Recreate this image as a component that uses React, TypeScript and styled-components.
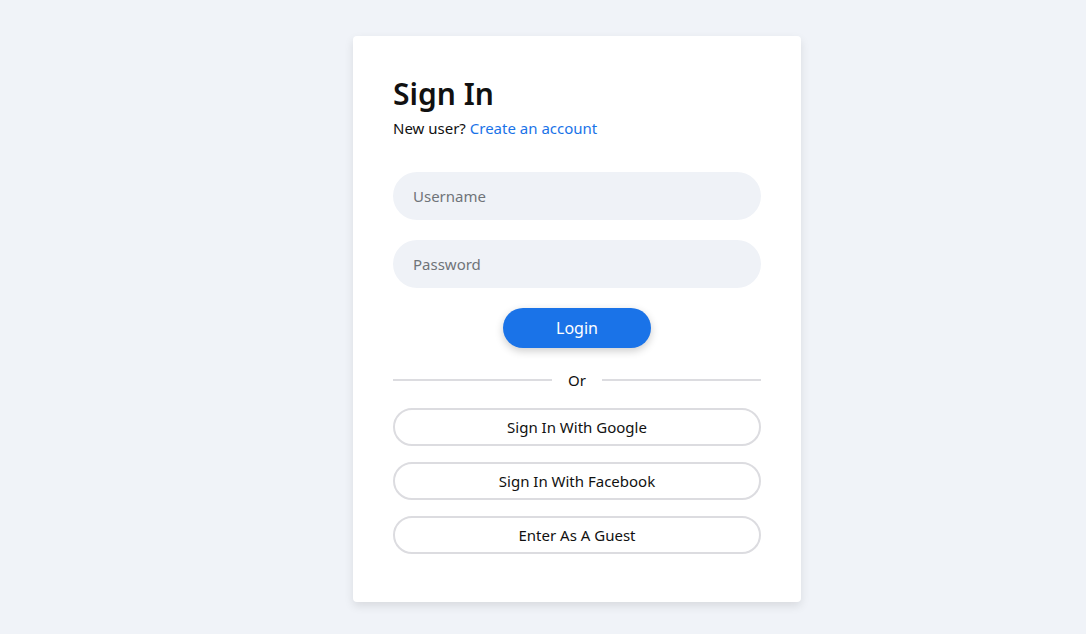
import React from 'react';
import styled, { createGlobalStyle } from 'styled-components';

const GlobalStyle = createGlobalStyle`
  html, body {
    margin: 0;
    padding: 0;
    background: #f0f3f8;
    font-family: 'Noto Sans', 'Open Sans', sans-serif;
    color: #111;
  }
  * {
    box-sizing: border-box;
  }
`;

const Page = styled.div`
  min-height: 634px;
  display: flex;
  justify-content: center;
  align-items: flex-start;
  padding: 36px 0 0 68px;
`;

const Card = styled.div`
  width: 448px;
  background: #fff;
  border-radius: 4px;
  box-shadow: 0 4px 10px rgba(0, 0, 0, 0.1);
  padding: 40px 40px 48px;
  display: flex;
  flex-direction: column;
`;

const Title = styled.h1`
  margin: 0;
  font-size: 30px;
  font-weight: 600;
  line-height: 36px;
  color: #111;
`;

const Subtitle = styled.p`
  margin: 4px 0 0;
  font-size: 15px;
  line-height: 24px;
  color: #111;
`;

const Link = styled.a`
  color: #1a73e8;
  text-decoration: none;
  cursor: pointer;
`;

const Form = styled.form`
  margin-top: 32px;
  display: flex;
  flex-direction: column;
  gap: 20px;
`;

const Input = styled.input`
  width: 100%;
  height: 48px;
  border: none;
  border-radius: 24px;
  background: #eff2f7;
  padding: 0 20px;
  font-family: inherit;
  font-size: 15px;
  color: #111;
  outline: none;

  &::placeholder {
    color: #6f7479;
  }
`;

const LoginButton = styled.button`
  align-self: center;
  width: 148px;
  height: 40px;
  border: none;
  border-radius: 20px;
  background: #1a73e8;
  color: #fff;
  font-family: inherit;
  font-size: 16px;
  box-shadow: 0 3px 8px rgba(0, 0, 0, 0.2);
  cursor: pointer;
`;

const Divider = styled.div`
  margin: 20px 0 16px;
  display: flex;
  align-items: center;
  gap: 16px;
  font-size: 15px;
  line-height: 24px;

  &::before,
  &::after {
    content: '';
    flex: 1;
    height: 2px;
    background: #dcdce0;
  }
`;

const AltList = styled.div`
  display: flex;
  flex-direction: column;
  gap: 16px;
`;

const OutlineButton = styled.button`
  width: 100%;
  height: 38px;
  border: 2px solid #dcdce0;
  border-radius: 19px;
  background: #fff;
  color: #111;
  font-family: inherit;
  font-size: 15px;
  cursor: pointer;
`;

export default function App() {
  return (
    <>
      <GlobalStyle />
      <Page>
        <Card>
          <Title>Sign In</Title>
          <Subtitle>
            New user? <Link>Create an account</Link>
          </Subtitle>
          <Form onSubmit={(e) => e.preventDefault()}>
            <Input placeholder="Username" />
            <Input placeholder="Password" type="password" />
            <LoginButton type="submit">Login</LoginButton>
          </Form>
          <Divider>Or</Divider>
          <AltList>
            <OutlineButton>Sign In With Google</OutlineButton>
            <OutlineButton>Sign In With Facebook</OutlineButton>
            <OutlineButton>Enter As A Guest</OutlineButton>
          </AltList>
        </Card>
      </Page>
    </>
  );
}
